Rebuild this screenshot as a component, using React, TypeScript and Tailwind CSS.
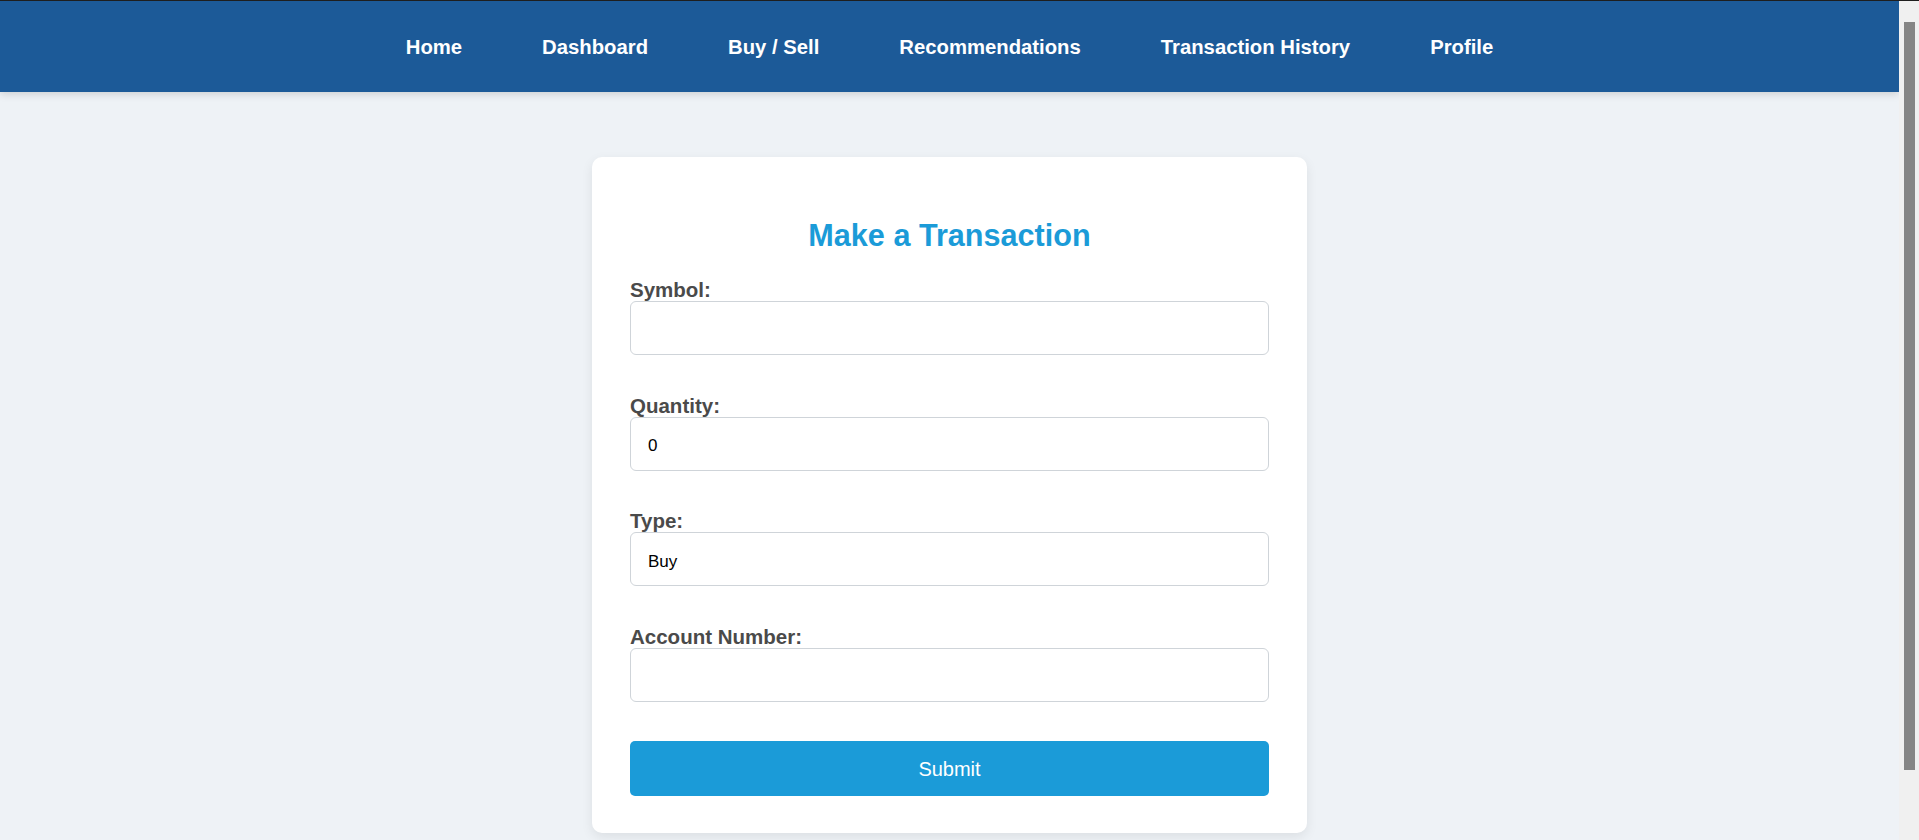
const links = ["Home", "Dashboard", "Buy / Sell", "Recommendations", "Transaction History", "Profile"];

function Field({ label, children }: { label: string; children: React.ReactNode }) {
  return (
    <div className="mb-[38.7px]">
      <label className="block text-[20.5px] leading-[23px] font-bold text-[#4a4a4a]">{label}</label>
      {children}
    </div>
  );
}

const inputCls =
  "block w-full h-[54px] rounded-[6px] border border-[#cfd4d9] bg-white px-[17px] pt-[5px] text-[17px] text-black outline-none";

export default function App() {
  return (
    <div className="h-screen flex flex-col overflow-hidden" style={{ fontFamily: '"Liberation Sans", Arial, sans-serif' }}>
      {/* top window edge */}
      <div className="h-px bg-[#1e1e1e]" />

      <div className="flex flex-1 min-h-0">
        <div className="flex-1 overflow-hidden bg-[#eef2f6]">
          {/* Nav */}
          <nav className="relative z-10 h-[91px] bg-[#1c5a98] flex items-center justify-center gap-[80px] pt-[2px] shadow-[0_2px_8px_rgba(0,0,0,0.15)]">
            {links.map((l) => (
              <a key={l} href="#" className="text-[20.3px] font-bold text-white">
                {l}
              </a>
            ))}
          </nav>

          {/* Card */}
          <div className="mx-auto mt-[65px] mb-[62px] w-[715px] rounded-[10px] bg-white px-[38px] pt-[36px] pb-[37.5px] shadow-[0_4px_12px_rgba(0,0,0,0.08)]">
            <h2 className="mt-[25px] mb-[26px] text-center text-[30.6px] font-bold text-[#1b9bd8] leading-[34px]">
              Make a Transaction
            </h2>
            <form onSubmit={(e) => e.preventDefault()}>
              <Field label="Symbol:">
                <input type="text" className={inputCls} />
              </Field>
              <Field label="Quantity:">
                <input type="number" defaultValue={0} className={inputCls} />
              </Field>
              <Field label="Type:">
                <select defaultValue="Buy" className={`${inputCls} appearance-none`}>
                  <option>Buy</option>
                  <option>Sell</option>
                </select>
              </Field>
              <Field label="Account Number:">
                <input type="text" className={inputCls} />
              </Field>
              <button type="submit" className="block w-full h-[55px] rounded-[5px] bg-[#1b9bd8] pt-[2px] text-[20px] text-white">
                Submit
              </button>
            </form>
          </div>
        </div>

        {/* scrollbar */}
        <div className="w-[20px] bg-[#f0f0f0] pt-[21px] pl-[5px] pr-[4px]">
          <div className="h-[748px] bg-[#858585]" />
        </div>
      </div>
    </div>
  );
}
